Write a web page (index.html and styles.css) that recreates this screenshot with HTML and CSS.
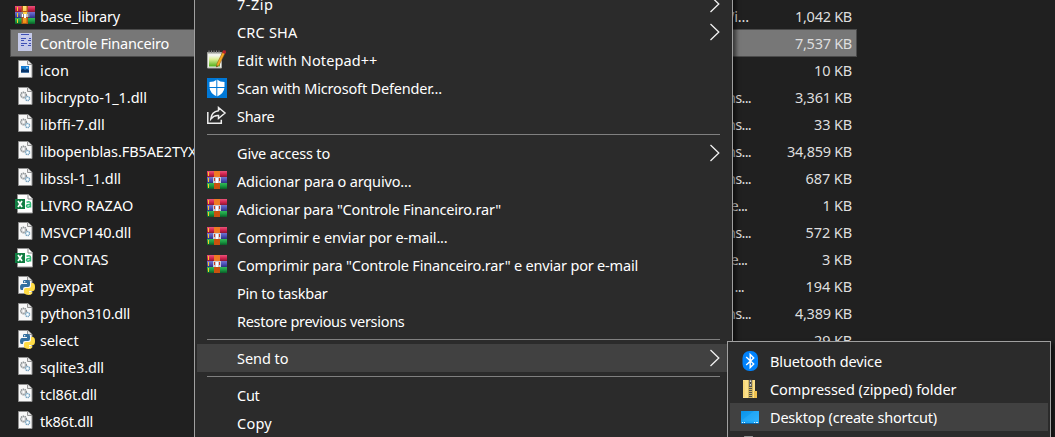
FILE: index.html
```
<!DOCTYPE html>
<html lang="en">
<head>
<meta charset="utf-8">
<title>Send to</title>
<link rel="stylesheet" href="styles.css">
</head>
<body>
<svg class="defs" aria-hidden="true">
  <defs>
    <linearGradient id="gold" x2="0" y2="1"><stop stop-color="#ffe77a"/><stop offset="1" stop-color="#f28c10"/></linearGradient>
    <linearGradient id="red" x2="0" y2="1"><stop stop-color="#e8557a"/><stop offset=".5" stop-color="#d32450"/><stop offset="1" stop-color="#8c1734"/></linearGradient>
    <linearGradient id="blue" x2="0" y2="1"><stop stop-color="#7276cf"/><stop offset=".5" stop-color="#4d51b8"/><stop offset="1" stop-color="#2c3180"/></linearGradient>
    <linearGradient id="green" x2="0" y2="1"><stop stop-color="#35b958"/><stop offset=".5" stop-color="#199a42"/><stop offset="1" stop-color="#0b5c28"/></linearGradient>
    <linearGradient id="pad" x2="0" y2="1"><stop stop-color="#f4f7ec"/><stop offset=".35" stop-color="#dcef94"/><stop offset="1" stop-color="#4fae18"/></linearGradient>
    <linearGradient id="sky" x2="1" y2="1"><stop stop-color="#0a93e8"/><stop offset="1" stop-color="#28b1ff"/></linearGradient>
  </defs>
  <symbol id="rar" viewBox="0 1 20 20">
    <rect y="1" width="20" height="6" fill="url(#red)"/><rect y="7" width="20" height="6" fill="url(#blue)"/><rect y="13" width="20" height="6" fill="url(#green)"/>
    <path d="M1.500 2v4M1.500 8v4M1.500 14v4" stroke="#f5c928"/>
    <rect x="7" y="1" width="6" height="6" fill="#ef7b24"/><rect x="7" y="13" width="6" height="6" fill="#c9520e"/>
    <path d="M6 7h8v6H6z" fill="#c9cad6"/><path d="M7.500 8v3M12.500 8v3" stroke="#c63b24"/><path d="M9 8h2v5H9z" fill="#fff"/>
  </symbol>
  <symbol id="rarfile" viewBox="0 0 20 20">
    <rect y="1" width="20" height="6" fill="url(#red)"/><rect y="7" width="20" height="6" fill="url(#blue)"/><rect y="13" width="20" height="6" fill="url(#green)"/>
    <path d="M2.500 2v4M2.500 8v4M2.500 14v4" stroke="#f5c928"/>
    <rect x="6.500" y="1" width="6.500" height="18" fill="#b45a16"/><path d="M8 1h3.500v5H8zM8 13h3.500v5H8z" fill="url(#gold)"/>
    <path d="M5.500 7h9v5h-9z" fill="#8c8790"/><path d="M8 7h4v2H8z" fill="#ffd344"/><path d="M7.500 9v3M12 9v3" stroke="#fff"/><path d="M9 9h2v4H9z" fill="#fff"/>
  </symbol>
  <symbol id="page" viewBox="0 0 20 20">
    <path d="M3.500 1.500h9.500l4 4v13H3.500z" fill="#f8f8f8" stroke="#929292"/><path d="M12.500 1.500v4h4.500" fill="#e4e4e4" stroke="#929292"/>
  </symbol>
  <symbol id="dll" viewBox="0 0 20 20">
    <use href="#page"/>
    <circle cx="8.500" cy="9" r="2.800" fill="#d9dadb" stroke="#858a8d" stroke-width="1.400" stroke-dasharray="1.300 .7"/><circle cx="8.500" cy="9" r="1" fill="#fff"/>
    <circle cx="12.500" cy="12.500" r="2.200" fill="#d6e8f3" stroke="#729dba" stroke-width="1.200" stroke-dasharray="1.200 .6"/><circle cx="12.500" cy="12.500" r=".8" fill="#fff"/>
  </symbol>
  <symbol id="image" viewBox="0 0 20 20">
    <use href="#page"/><path d="M6 7h8v6.500H6z" fill="#167bd0"/><path d="M6 13.500V11l2-1.500 2 1.500 2-1 2 1.500v2z" fill="#0a3468"/><circle cx="12" cy="8.700" r=".9" fill="#9fdcff"/>
  </symbol>
  <symbol id="form" viewBox="0 0 20 20">
    <path d="M3 1h14v18H3z" fill="#c5cae9"/>
    <path d="M6 2.500h8M6 6.500h5M14 6.500h2M6 8.500h3M13 8.500h3M6 11.500h6M14 11.500h2M6 13.500h3M13 13.500h3" stroke="#3f51b5"/>
  </symbol>
  <symbol id="excel" viewBox="0 0 20 20">
    <path d="M2.500.5h11l4 4v14.500h-15z" fill="#fff" stroke="#929292"/><path d="M13 .5v4.500h4.500" fill="none" stroke="#8d8d8d"/>
    <path d="M11.500 8.300q4-1.500 4 1.300v4M15.500 10.500q-4-.3-4 1.800 1.500 2.300 4-.5" fill="none" stroke="#31bd79" stroke-width="1.500"/>
    <rect y="5" width="10" height="10" fill="#107c41"/><path d="M3 7l4 6M7 7l-4 6" stroke="#fff" stroke-width="1.700"/>
  </symbol>
  <symbol id="python" viewBox="0 0 20 20">
    <use href="#page"/>
    <path d="M9 5h4q2 0 2 2v3q0 2-2 2h-3q-2 0-2 2v1H6.500Q5 15 5 12.500 5 9 7 9h5V8H8V6.500Q8 5 9 5z" fill="#336f9f"/>
    <path d="M16 8h1.500Q20 8 20 12t-2 4h-4v1h3v1.500Q16.500 20 13.500 20T9 18v-3q0-2 2-2h3q2 0 2-2z" fill="#ffdc46"/>
    <circle cx="9.700" cy="6.700" r=".7" fill="#fff"/><circle cx="14.800" cy="18.300" r=".7" fill="#fff"/>
  </symbol>
  <symbol id="notepad" viewBox="0 0 20 20">
    <path d="M.5 2.500h14v15.500H.5z" fill="#f2f3ed" stroke="#a9aaa5"/><path d="M2 5.500h11v11H2z" fill="url(#pad)"/>
    <path d="M2 .5v3M4.500.5v3M7 .5v3M9.500.5v3M12 .5v3" stroke="#888"/><path d="M1 3.500h13" stroke="#c4c6c0"/>
    <path d="M16.200 1l2.300 1.300-6.500 13-2.500 1.700.3-3z" fill="#f5a623" stroke="#8a5512" stroke-width=".5"/><path d="M16.200.3l2.600.2.1 2-1 1.600-2.500-1.400z" fill="#b51f2a"/><path d="M9.500 17l.2-1.600 1.200.6z" fill="#222"/>
  </symbol>
  <symbol id="defender" viewBox="0 0 20 20">
    <path d="M0 0h20v20H0z" fill="#0078d7"/><path d="M10 1.500Q7 4 2.500 4v5.500Q3 15.500 10 18.500q7-3 7.500-9V4Q13 4 10 1.500z" fill="#fff"/><path d="M9.800 1v18M2 9.500h16" stroke="#0078d7"/>
  </symbol>
  <symbol id="share" viewBox="0 0 20 20">
    <path d="M.8 6v11.200h13.500v-3.500" fill="none" stroke="#eee" stroke-width="1.500"/><path d="M11.500 1.500l6.500 5.500-6.500 5.500V9.500Q7 9 3.800 13 4.500 5.500 11.500 4.700z" fill="none" stroke="#eee" stroke-width="1.500"/>
  </symbol>
  <symbol id="bluetooth" viewBox="-1 0 20 20">
    <rect x="1.500" width="15.500" height="20" rx="7" fill="#0082fc"/><path d="M5.200 6l7.500 7-3.500 3.500v-13l3.500 3.500-7.500 7" fill="none" stroke="#fff" stroke-width="1.400"/>
  </symbol>
  <symbol id="zip" viewBox="-1 0 20 20">
    <path d="M2 1h12v11h2v7H2z" fill="#fbe08a"/><path d="M3 2v16" stroke="#f3ce62"/><path d="M13 12h3v7h-3z" fill="#efc14e"/>
    <path d="M7 1h5v18H7z" fill="#d5b962"/><path d="M9.500 1v18" stroke="#505050" stroke-width="3" stroke-dasharray="1 1"/><path d="M8.500 1h2v6h-2z" fill="#ddd" stroke="#555" stroke-width=".7"/><path d="M9.500 3v2" stroke="#444"/>
  </symbol>
  <symbol id="desktop" viewBox="-1 0 20 20">
    <path d="M0 4h18v12H0z" fill="url(#sky)"/><path d="M0 16h18v1H0z" fill="#0a68ae"/><path d="M1 15.500h1M3 15.500h1M13 15.500h1M15 15.500h2" stroke="#e0f5ff"/><path d="M0 14L13 4h5v10z" fill="#5cc9ff" opacity=".18"/>
  </symbol>
  <symbol id="doc" viewBox="0 0 20 20"><path d="M4.500 1.500h8l4 4V20h-12z" fill="#f8f8f8" stroke="#929292"/></symbol>
  <symbol id="chevron" viewBox="0 0 12 18"><path d="M1.500 1l8.300 8-8.300 8" fill="none" stroke="#f2f2f2" stroke-width="1.300"/></symbol>
</svg>
<main class="explorer">
  <div class="files" id="files"></div>
  <nav class="menu" id="menu"></nav>
  <nav class="submenu" id="submenu"></nav>
</main>
<script src="app.js"></script>
</body>
</html>
```
FILE: styles.css
```
* { box-sizing: border-box; }
body {
  margin: 0;
  background: #202020;
  color: #fff;
  font: 14.5px/20px "Noto Sans", "Open Sans", sans-serif;
}
.defs { position: absolute; width: 0; height: 0; }
.explorer { position: relative; width: 1055px; height: 437px; overflow: hidden; }
.files { padding-top: 3px; width: 857px; }
.file {
  display: grid;
  grid-template-columns: 20px 650px 1fr 100px;
  height: 27px;
  margin-left: 10px;
  padding-left: 5px;
  padding-right: 5px;
  align-items: center;
}
.file.selected { background: #777; box-shadow: inset 0 0 0 1px #4b4b4b; margin-top: -1px; height: 28px; }
.icon { display: block; width: 20px; height: 20px; }
.file .icon { margin-top: -3px; }
.text { display: block; white-space: pre; width: max-content; }
.name, .kind, .size { padding-bottom: 2px; }
.selected .name, .selected .size { padding-bottom: 1px; }
.name { padding-left: 5px; width: 190px; overflow: hidden; }
.kind { color: #dedede; display: flex; justify-content: flex-end; }
.size { color: #dedede; display: flex; justify-content: flex-end; }
.menu, .submenu {
  position: absolute;
  background: #2b2b2b;
  border: 1px solid #a0a0a0;
  box-shadow: 3px 3px 4px rgba(0, 0, 0, .55);
  padding: 0 2px;
}
.menu { left: 194px; top: -13px; width: 539px; height: 470px; padding-top: 2px; }
.submenu { left: 727px; top: 341px; width: 324px; height: 120px; padding-top: 5px; }
.item {
  display: grid;
  grid-template-columns: 20px 1fr 12px;
  column-gap: 10px;
  height: 28px;
  align-items: center;
  padding: 0 9px 0 10px;
}
.item .text { padding-bottom: 1px; }
.item.active { background: #414141; }
.chevron { display: block; width: 12px; height: 18px; }
.rule { height: 1px; margin: 4px 10px; background: #808080; }
```
FILE: app.js
```
// Labels carry the pixel width they occupy, and are tracked to fit it.
const files = [
  ["rarfile", "base_library", 79, "Wi...", 749, "1,042 KB", 56],
  ["form", "Controle Financeiro", 128, "", 749, "7,537 KB", 56],
  ["image", "icon", 28, "", 749, "10 KB", 37],
  ["dll", "libcrypto-1_1.dll", 106, "ns...", 751, "3,361 KB", 56],
  ["dll", "libffi-7.dll", 64, "ns...", 751, "33 KB", 37],
  ["dll", "libopenblas.FB5AE2TYX", 155.500, "ns...", 751, "34,859 KB", 64],
  ["dll", "libssl-1_1.dll", 80, "ns...", 751, "687 KB", 45.500],
  ["excel", "LIVRO RAZAO", 92.500, "e...", 747, "1 KB", 28.500],
  ["dll", "MSVCP140.dll", 90, "ns...", 751, "572 KB", 45.500],
  ["excel", "P CONTAS", 67.500, "e...", 747, "3 KB", 29],
  ["python", "pyexpat", 52.500, "...", 744, "194 KB", 45.500],
  ["dll", "python310.dll", 89, "ns...", 751, "4,389 KB", 56],
  ["python", "select", 37.500, "", 744, "29 KB", 37],
  ["dll", "sqlite3.dll", 63],
  ["dll", "tcl86t.dll", 56],
  ["dll", "tk86t.dll", 52]
];
const kindWidths = { "Wi...": 27, "ns...": 23, "e...": 15.500, "...": 8.500 };
const menu = [
  ["", "7-Zip", 35.500, true],
  ["", "CRC SHA", 59.500, true],
  ["notepad", "Edit with Notepad++", 139.500],
  ["defender", "Scan with Microsoft Defender...", 204],
  ["share", "Share", 36.500],
  null,
  ["", "Give access to", 92, true],
  ["rar", "Adicionar para o arquivo...", 173.500],
  ["rar", "Adicionar para \"Controle Financeiro.rar\"", 263],
  ["rar", "Comprimir e enviar por e-mail...", 209.500],
  ["rar", "Comprimir para \"Controle Financeiro.rar\" e enviar por e-mail", 400],
  ["", "Pin to taskbar", 89.500],
  ["", "Restore previous versions", 166.500],
  null,
  ["", "Send to", 50.500, true, true],
  null,
  ["", "Cut", 21.500],
  ["", "Copy", 34]
];
const submenu = [
  ["bluetooth", "Bluetooth device", 111],
  ["zip", "Compressed (zipped) folder", 185.500],
  ["desktop", "Desktop (create shortcut)", 166, false, true],
  ["doc", "", 0]
];

const icon = (id) => id ? `<svg class="icon"><use href="#${id}"/></svg>` : "<span></span>";
const text = (s, w) => `<span class="text" data-width="${w || ""}">${s || ""}</span>`;
const item = (r) => !r ? '<div class="rule"></div>' :
  `<div class="item${r[4] ? " active" : ""}">${icon(r[0])}${text(r[1], r[2])}${r[3] ? '<svg class="chevron"><use href="#chevron"/></svg>' : ""}</div>`;

document.getElementById("files").innerHTML = files.map((f, i) =>
  `<div class="file${i === 1 ? " selected" : ""}">${icon(f[0])}<div class="name">${text(f[1], f[2])}</div>` +
  `<div class="kind" style="margin-right:${752 - (f[4] || 752)}px">${text(f[3], kindWidths[f[3]])}</div><div class="size">${text(f[5], f[6])}</div></div>`).join("");
document.getElementById("menu").innerHTML = menu.map(item).join("");
document.getElementById("submenu").innerHTML = submenu.map(item).join("");

document.querySelectorAll(".text").forEach((el) => {
  const want = Number(el.dataset.width);
  if (!want) return;
  const gap = (want - el.getBoundingClientRect().width + 1) / el.textContent.length;
  el.style.letterSpacing = gap + "px";
});
```
